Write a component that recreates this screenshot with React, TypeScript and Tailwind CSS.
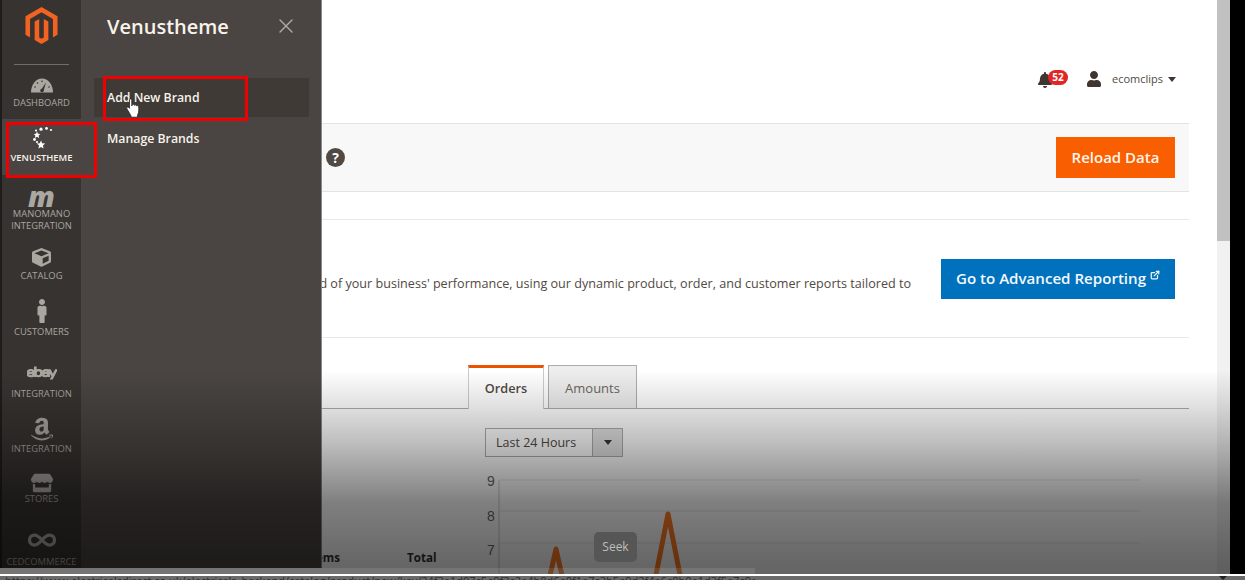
import * as React from "react";
import { FaAmazon, FaBell, FaCube, FaEbay, FaMale, FaStore, FaUser } from "react-icons/fa";
import { SiMagento } from "react-icons/si";
import { ExternalLink, Infinity as InfinityIcon, X } from "lucide-react";

const NavItem: React.FC<{
  label: string;
  className: string;
  children: React.ReactNode;
}> = ({ label, className, children }) => (
  <div
    className={`flex flex-col items-center shrink-0 text-center text-[9.4px] leading-[12px] ${className}`}
  >
    {children}
    <span className="whitespace-pre-line uppercase">{label}</span>
  </div>
);

const GaugeIcon = () => (
  <svg width="22" height="15" viewBox="0 0 22 15">
    <path
      d="M0 14.5C0 6.5 5 0.5 11 0.5S22 6.5 22 14.5Z"
      fill="#aaa6a0"
    />
    <path d="M10 12L15 4.5L12.5 13Z" fill="#373330" />
    <circle cx="11" cy="12.5" r="1.8" fill="#373330" />
    <circle cx="4" cy="9" r="0.8" fill="#373330" />
    <circle cx="6.5" cy="5" r="0.8" fill="#373330" />
    <circle cx="11" cy="3.2" r="0.8" fill="#373330" />
    <circle cx="18" cy="9" r="0.8" fill="#373330" />
  </svg>
);

const VenusIcon = () => (
  <svg width="22" height="23" viewBox="0 0 22 23" fill="#fff">
    <circle cx="20" cy="3" r="1.1" />
    <circle cx="15.5" cy="1.4" r="1.4" />
    <circle cx="10" cy="2.2" r="1.6" />
    <circle cx="5" cy="3.5" r="1.1" />
    <path d="M6 4.5l1 2.2 2.3.3-1.7 1.6.5 2.3L6 9.8l-2.1 1.1.5-2.3L2.7 7l2.3-.3Z" />
    <circle cx="3.5" cy="12.5" r="1.4" />
    <circle cx="6" cy="15" r="1.1" />
    <path d="M10 13.5l1.2 2.8 3 .3-2.3 2 .7 3-2.6-1.6-2.6 1.6.7-3-2.3-2 3-.3Z" />
  </svg>
);

const HandCursor = () => (
  <svg width="15" height="21" viewBox="0 0 15 21">
    <path
      d="M3.5 1.8C3.5.6 5.8.6 5.8 1.8V8l.3-1.2c.7-.8 2.1-.6 2.3.5.5-.8 2-.6 2.2.6.6-.6 2-.3 2.1.8.2 2.6.2 5.3-.8 7.6l-.7 2.9H5.3l-.6-2L.9 10.8c-.7-1 .5-2.3 1.6-1.5l1 1Z"
      fill="#fff"
      stroke="#222"
      strokeWidth="0.8"
    />
  </svg>
);

const Sidebar = () => (
  <div className="flex h-[568px] shrink-0 bg-[#1f1d1b] pl-[2px]">
    <nav className="flex w-[79px] flex-col bg-[#373330] text-[#aaa6a0]">
      <div className="mx-[12px] flex h-[65px] shrink-0 justify-center border-b border-[#736e69] pt-[7px] text-[#f26322]">
        <SiMagento size={37} />
      </div>
      <NavItem label="Dashboard" className="h-[54px] pt-[13px]">
        <div className="mb-[4px]">
          <GaugeIcon />
        </div>
      </NavItem>
      <NavItem
        label="Venustheme"
        className="h-[56px] bg-[#4a4542] pt-[8px] font-semibold text-[#f7f3eb]"
      >
        <div className="mb-[2px]">
          <VenusIcon />
        </div>
      </NavItem>
      <NavItem label={"Manomano\nIntegration"} className="h-[63px] pt-[12px]">
        <div className="mb-[1px] h-[20px] text-[29px] leading-[18px] font-extrabold italic">
          m
        </div>
      </NavItem>
      <NavItem label="Catalog" className="h-[56px] pt-[10px]">
        <div className="mb-[3px]">
          <FaCube size={19} />
        </div>
      </NavItem>
      <NavItem label="Customers" className="h-[62px] pt-[5px]">
        <div className="mb-[3px]">
          <FaMale size={24} />
        </div>
      </NavItem>
      <NavItem label="Integration" className="h-[56px] pt-[2px]">
        <div className="h-[30px]">
          <FaEbay size={30} stroke="currentColor" strokeWidth={24} />
        </div>
      </NavItem>
      <NavItem label="Integration" className="h-[56px] pt-[4px]">
        <div className="h-[27px]">
          <FaAmazon size={26} />
        </div>
      </NavItem>
      <NavItem label="Stores" className="h-[64px] pt-[4px]">
        <div className="-mb-[1px]">
          <FaStore size={22} />
        </div>
      </NavItem>
      <NavItem label="CedCommerce" className="">
        <div className="-mt-[7px] mb-[1px]">
          <InfinityIcon size={30} strokeWidth={2.6} />
        </div>
      </NavItem>
    </nav>
    <aside className="flex w-[240px] flex-col bg-[#4a4542] text-[#f7f3eb]">
      <div className="flex h-[78px] shrink-0 justify-between pt-[12px] pr-[23px] pl-[26px]">
        <h1 className="text-[20px] leading-[30px] font-semibold">Venustheme</h1>
        <X size={24} strokeWidth={1.4} className="mt-[2px] text-[#b0aca6]" />
      </div>
      <a className="mr-[12px] ml-[13px] flex h-[39px] items-center bg-[#3f3a36] px-[13px] pt-[2px] text-[12.3px] font-semibold">
        Add New Brand
      </a>
      <a className="mr-[12px] ml-[13px] flex h-[42px] items-center px-[13px] pt-[2px] text-[12.3px] font-semibold">
        Manage Brands
      </a>
    </aside>
    <div className="w-[1px] bg-[#8b8a88]" />
  </div>
);

const TopBar = () => (
  <div className="flex h-[123px] shrink-0 items-start justify-end pt-[70px] pr-[13px] text-[#41362f]">
    <div className="relative mt-[2px] mr-[33px]">
      <FaBell size={16} />
      <span className="absolute -top-[2px] left-[11px] flex h-[15px] w-[20px] items-center justify-center rounded-full bg-[#e22626] text-[10px] font-bold text-white">
        52
      </span>
    </div>
    <FaUser size={16} className="mt-[1px] mr-[10px] text-[#41362f]" />
    <span className="text-[11px] leading-[18px] text-[#514943]">ecomclips</span>
    <span className="mt-[7px] ml-[5px] h-0 w-0 border-x-[4px] border-t-[5px] border-x-transparent border-t-[#41362f]" />
  </div>
);

const Chart = () => (
  <svg width="654" height="104" viewBox="0 0 654 104" className="shrink-0">
    <path d="M13 10V104" stroke="#c8c8c8" />
    {[10, 41, 73].map((y) => (
      <path key={y} d={`M13 ${y}H654`} stroke="#e6e6e6" />
    ))}
    <g fill="#666" fontSize="14" fontFamily="Liberation Sans, sans-serif">
      <text x="1" y="16">9</text>
      <text x="1" y="51">8</text>
      <text x="1" y="85">7</text>
    </g>
    <g fill="none" stroke="#ff7a22" strokeWidth="5" strokeLinejoin="round">
      <path d="M63 110L70 79L77 110" />
      <path d="M169 110L182 44L195 110" />
    </g>
  </svg>
);

const Main = () => (
  <main className="flex h-[574px] min-w-0 flex-1 flex-col overflow-hidden bg-white pr-[28px] text-[#514943]">
    <TopBar />
    <div className="flex h-[69px] shrink-0 items-center justify-between border-y border-[#e3e3e3] bg-[#f8f8f8] pr-[14px] pl-[4px]">
      <span className="flex h-[19px] w-[19px] items-center justify-center rounded-full bg-[#514943] text-[14px] font-bold text-white">
        ?
      </span>
      <button className="h-[41px] w-[119px] bg-[#f95e00] text-[15px] font-semibold text-[#fff5ec]">
        Reload Data
      </button>
    </div>
    <div className="mt-[27px] flex h-[119px] shrink-0 items-center border-y border-[#e8e8e8] pr-[14px]">
      <div className="mt-[12px] flex min-w-0 flex-1 justify-end overflow-hidden pr-[30px]">
        <p className="shrink-0 whitespace-nowrap text-[12.6px]">
          Gain new insights and take command of your business' performance, using our
          dynamic product, order, and customer reports tailored to
        </p>
      </div>
      <button className="flex h-[40px] w-[234px] shrink-0 items-center justify-center bg-[#0071bc] text-[15.1px] font-semibold text-[#f3f8fc]">
        Go to Advanced Reporting
        <ExternalLink size={10} strokeWidth={3} className="mb-[8px] ml-[4px]" />
      </button>
    </div>
    <div className="mt-[27px] flex h-[44px] shrink-0 items-end border-b border-[#adadad] pl-[146px] text-[13px]">
      <div className="-mb-px flex h-[44px] w-[76px] items-center justify-center border-x border-t-[3px] border-x-[#cccccc] border-t-[#eb5202] bg-white text-[12.7px] font-semibold">
        Orders
      </div>
      <div className="ml-[4px] flex h-[43px] w-[89px] items-center justify-center border border-b-0 border-[#adadad] bg-[#eeeeee] pt-[3px] text-[#6d6560]">
        Amounts
      </div>
    </div>
    <div className="mt-[19px] ml-[163px] flex h-[29px] w-[138px] shrink-0 border border-[#adadad] text-[12.5px]">
      <span className="flex flex-1 items-center pt-[1px] pl-[10px]">Last 24 Hours</span>
      <span className="flex w-[30px] items-center justify-center border-l border-[#adadad] bg-[#e3e3e3]">
        <span className="h-0 w-0 border-x-[4px] border-t-[5px] border-x-transparent border-t-[#41362f]" />
      </span>
    </div>
    <div className="mt-[13px] flex shrink-0">
      <div className="flex w-[164px] shrink-0 items-start pt-[79px] text-[11.6px] font-bold text-[#303030]">
        <span className="flex w-[18px] justify-end">
          <span className="shrink-0">Items</span>
        </span>
        <span className="ml-[67px]">Total</span>
      </div>
      <Chart />
    </div>
  </main>
);

export default function App() {
  return (
    <div className="relative flex h-[580px] w-[1245px] flex-col overflow-hidden bg-black font-['Open_Sans',sans-serif]">
      <div className="flex h-[574px] shrink-0">
        <div className="flex min-w-0 flex-1 items-start bg-white">
          <Sidebar />
          <Main />
        </div>
        <div className="w-[13px] shrink-0 bg-[#f1f1f1]">
          <div className="h-[241px] bg-[#c1c1c1]" />
        </div>
        <div className="w-[15px] shrink-0" />
      </div>
      <div className="h-[2px] shrink-0 bg-white" />
      <div className="flex h-[4px] shrink-0 items-start overflow-hidden bg-[#6b6b6a]">
        <p className="mt-[-1px] ml-[5px] w-[750px] overflow-hidden whitespace-nowrap text-[11px] leading-[12px] text-[#2d2d2d]">
          https://www.electricalsdirect.co.uk/electricals_backend/catalog/product/new/key/24f3a1d07c5e9f3c2a4b8d6e0f1a7c3b5e9d2f4a6c8b0e1d3f5a7c9e/set/4/type/simple/
        </p>
      </div>

      <div className="pointer-events-none absolute top-[370px] left-0 h-[204px] w-[1230px] bg-[linear-gradient(to_bottom,rgba(0,0,0,0)_0%,rgba(0,0,0,0.1)_15%,rgba(0,0,0,0.25)_35%,rgba(0,0,0,0.5)_65%,rgba(0,0,0,0.6)_95%)]" />
      <div className="absolute top-[568px] left-0 h-[6px] w-[755px] bg-white/10" />

      <div className="absolute top-[532px] left-[594px] flex h-[30px] w-[43px] items-center justify-center rounded-[5px] bg-[#565656] text-[12px] text-[#bdbdbd]">
        Seek
      </div>

      <div className="absolute top-[76px] left-[103px] h-[45px] w-[145px] border-[3px] border-[#f00000]" />
      <div className="absolute top-[122px] left-[6px] h-[56px] w-[91px] border-[3px] border-[#f00000]" />
      <div className="absolute top-[98px] left-[126px]">
        <HandCursor />
      </div>
      <span className="absolute top-[576px] left-[1219px] h-0 w-0 border-x-[4px] border-t-[4px] border-x-transparent border-t-[#222]" />
    </div>
  );
}
